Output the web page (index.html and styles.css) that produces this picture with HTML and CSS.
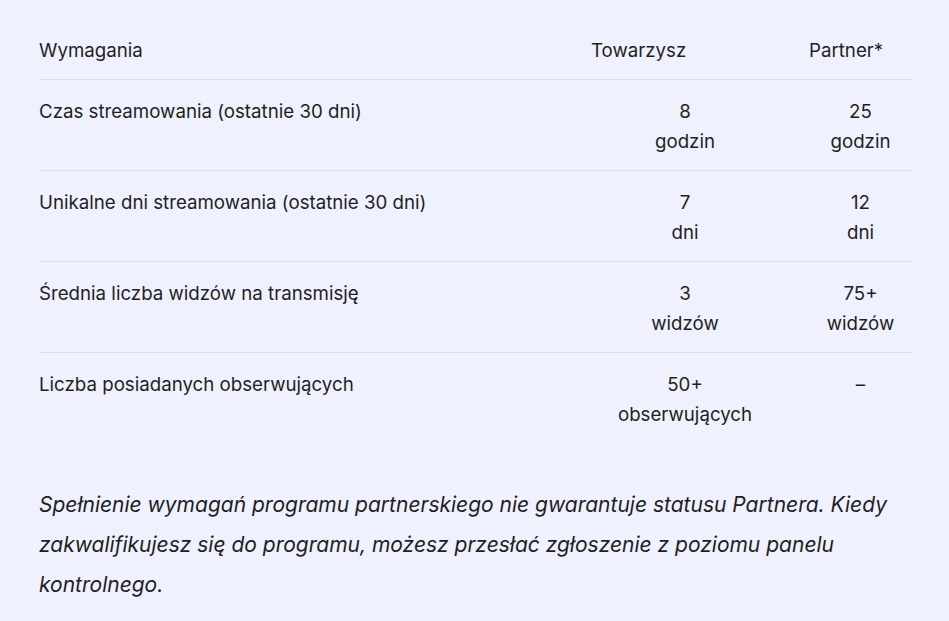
FILE: index.html
```html
<!DOCTYPE html>
<html lang="pl">
<head>
<meta charset="utf-8">
<link rel="stylesheet" href="styles.css">
</head>
<body>
<div class="page">
  <div class="table">
    <div class="row head">
      <div class="c1">Wymagania</div>
      <div class="c2">Towarzysz</div>
      <div class="c3">Partner*</div>
    </div>
    <div class="row">
      <div class="c1">Czas streamowania (ostatnie 30 dni)</div>
      <div class="c2 val">8<br>godzin</div>
      <div class="c3 val">25<br>godzin</div>
    </div>
    <div class="row">
      <div class="c1">Unikalne dni streamowania (ostatnie 30 dni)</div>
      <div class="c2 val">7<br>dni</div>
      <div class="c3 val">12<br>dni</div>
    </div>
    <div class="row">
      <div class="c1">Średnia liczba widzów na transmisję</div>
      <div class="c2 val">3<br>widzów</div>
      <div class="c3 val">75+<br>widzów</div>
    </div>
    <div class="row last">
      <div class="c1">Liczba posiadanych obserwujących</div>
      <div class="c2 val">50+<br>obserwujących</div>
      <div class="c3 val">–</div>
    </div>
  </div>
  <p class="note">Spełnienie wymagań programu partnerskiego nie gwarantuje statusu Partnera. Kiedy zakwalifikujesz się do programu, możesz przesłać zgłoszenie z poziomu panelu kontrolnego.</p>
</div>
</body>
</html>
```
FILE: styles.css
```css
html, body {
  margin: 0;
  padding: 0;
  background: #eff1fe;
}
body {
  font-family: Inter, "Noto Sans", sans-serif;
  color: #1f1f23;
}
.page {
  padding: 21px 37px 0 39px;
}
.table {
  display: flex;
  flex-direction: column;
}
.row {
  display: grid;
  grid-template-columns: 1fr 188px 103px;
  column-gap: 30px;
  padding: 17px 0 13px;
  border-bottom: 1px solid #dcdee8;
  font-size: 18.7px;
  line-height: 30px;
}
.row.head {
  padding: 15px 0 13px;
}
.row.last {
  border-bottom: none;
}
.val {
  text-align: center;
}
.note {
  margin: 42px 0 0;
  font-size: 21px;
  line-height: 40px;
  font-style: italic;
  padding-right: 10px;
}
```
